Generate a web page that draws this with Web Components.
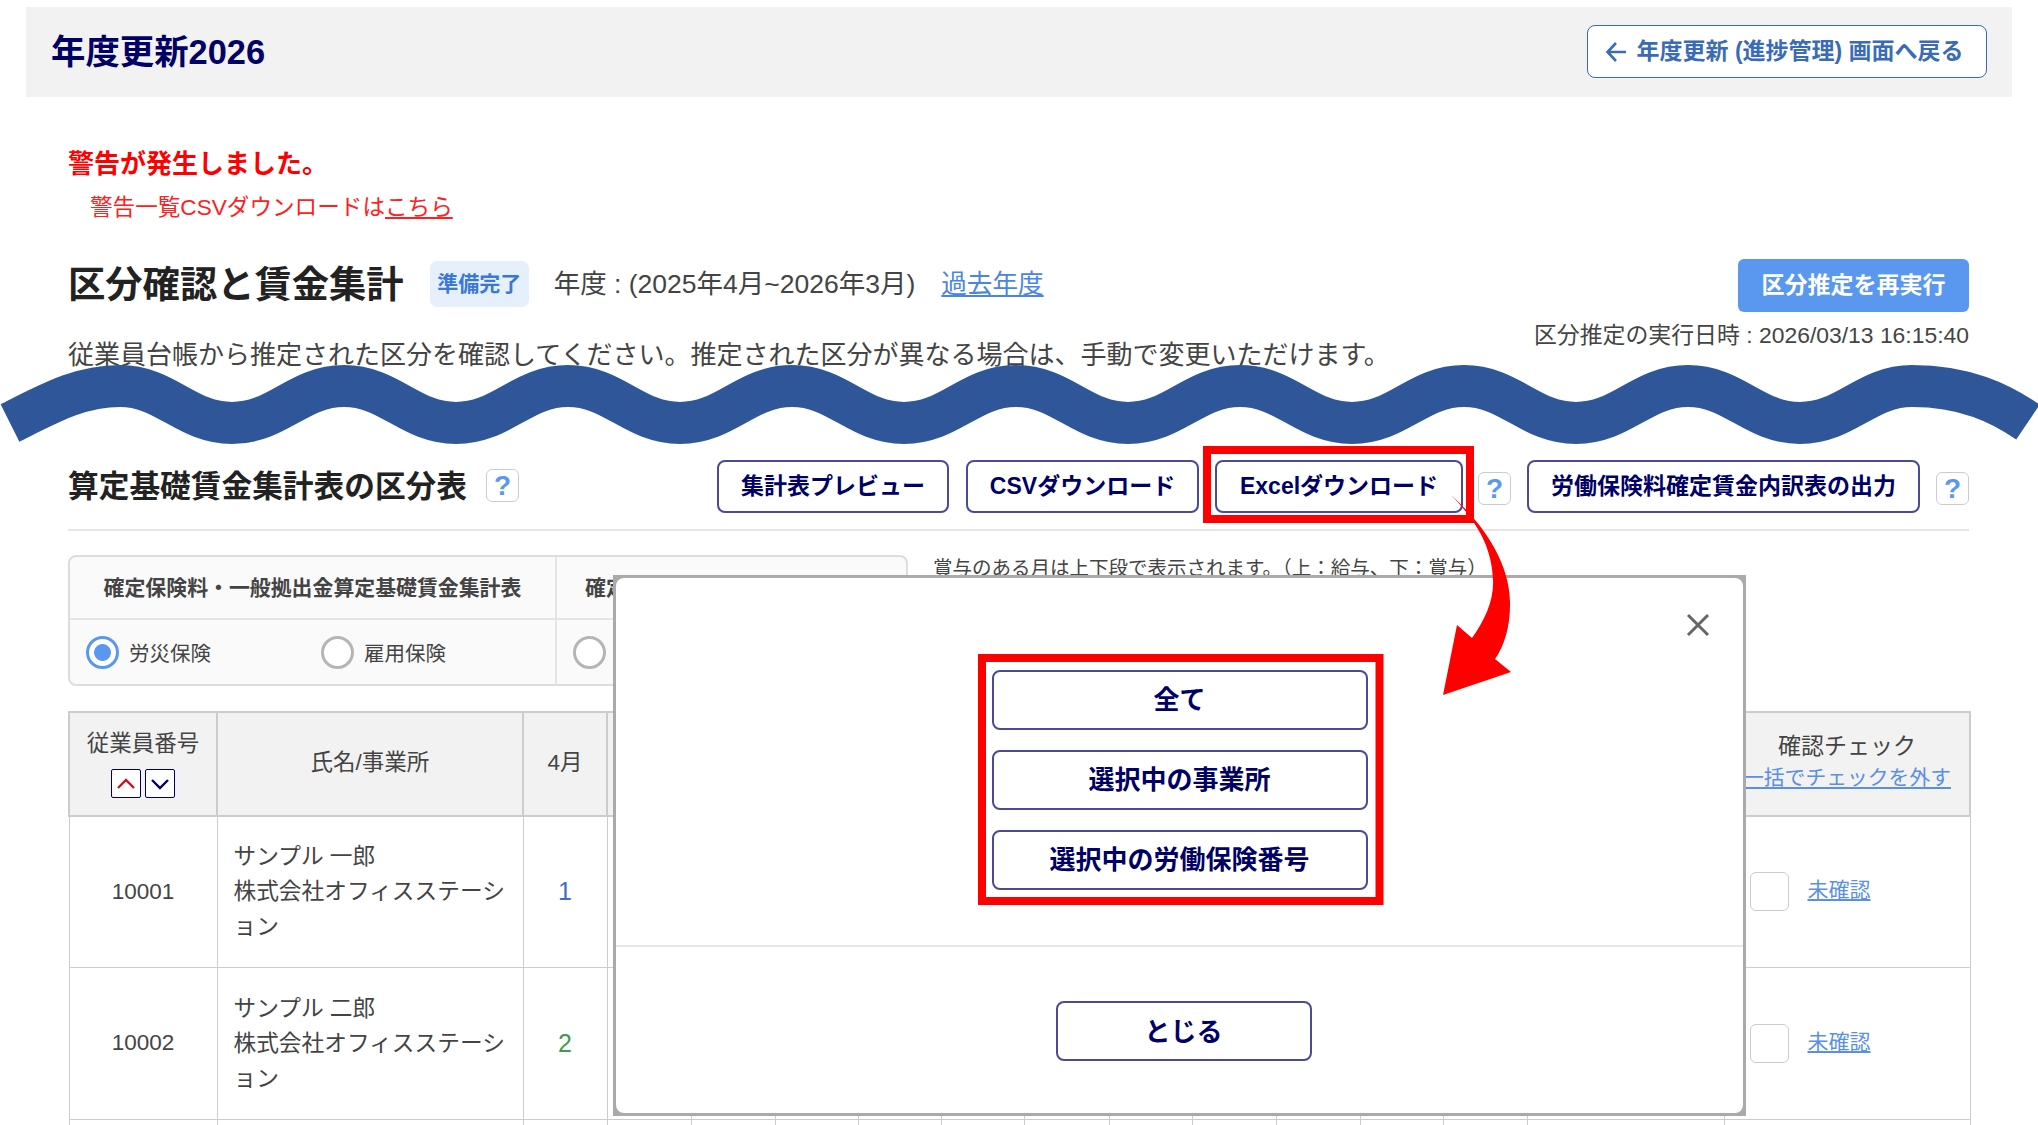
<!DOCTYPE html>
<html lang="ja">
<head>
<meta charset="utf-8">
<title>年度更新2026</title>
<style>
  html, body { margin: 0; padding: 0; background: #fff; }
  body {
    width: 2038px;
    height: 1125px;
    overflow: hidden;
    position: relative;
    font-family: "Liberation Sans", "Noto Sans CJK JP", sans-serif;
    color: #444;
  }
</style>
</head>
<body>
<app-header title="年度更新2026">
  <nav-btn kind="back">年度更新 (進捗管理) 画面へ戻る</nav-btn>
</app-header>

<page-main>
  <warn-box></warn-box>
  <result-head></result-head>
  <calc-toolbar></calc-toolbar>
  <tab-panel></tab-panel>
  <sheet-table></sheet-table>
</page-main>

<export-dialog></export-dialog>
<mark-layer></mark-layer>

<script>
const FONT = '"Liberation Sans", "Noto Sans CJK JP", sans-serif'

class AppHeader extends HTMLElement {
  constructor() {
    super()
    this.attachShadow({ mode: 'open' })
  }
  connectedCallback() {
    this.shadowRoot.innerHTML = `
      <style>
        :host {
          display: flex;
          align-items: center;
          justify-content: space-between;
          box-sizing: border-box;
          margin: 7px 0 0 26px;
          width: 1986px;
          height: 90px;
          padding: 0 25px;
          background: #f2f2f2;
          font-family: ${FONT};
        }
        h1 { margin: 0 0 7px; font-size: 34.4px; font-weight: 700; color: #000066; }
        ::slotted(nav-btn) { margin-top: -1px; }
      </style>
      <h1>${this.getAttribute('title')}</h1>
      <slot></slot>
    `
  }
}

class NavBtn extends HTMLElement {
  constructor() {
    super()
    this.attachShadow({ mode: 'open' })
  }
  connectedCallback() {
    const arrow = this.getAttribute('kind') === 'back' ? `
      <svg width="22" height="24" viewBox="0 0 22 24" fill="none" stroke="#3a6bb5" stroke-width="2.6" style="flex:none;margin-top:5px">
        <path d="M21 12H3M11 3 2.500 12l8.500 9"/>
      </svg>` : ''
    this.shadowRoot.innerHTML = `
      <style>
        :host {
          display: inline-flex;
          align-items: center;
          justify-content: center;
          box-sizing: border-box;
          height: 53px;
          padding: 0 23px 5px;
          background: #fff;
          border: 2px solid #4a4a96;
          border-radius: 8px;
          color: #000066;
          font-size: 23px;
          font-weight: 700;
          white-space: nowrap;
          font-family: ${FONT};
        }
        :host([kind="back"]) {
          width: 400px;
          gap: 10px;
          padding-left: 16.500px;
          padding-right: 0;
          justify-content: flex-start;
          border-color: #3a6bb5;
          color: #3a6bb5;
          border-width: 1.5px;
        }
        :host([kind="big"]) {
          width: 376px;
          height: 60px;
          padding: 0 0 6px;
          font-size: 26px;
        }
      </style>
      ${arrow}<slot></slot>
    `
  }
}

class HelpMark extends HTMLElement {
  constructor() {
    super()
    this.attachShadow({ mode: 'open' })
  }
  connectedCallback() {
    this.shadowRoot.innerHTML = `
      <style>
        :host {
          display: inline-flex;
          align-items: center;
          justify-content: center;
          box-sizing: border-box;
          width: 33px;
          height: 33px;
          background: #fff;
          border: 1.5px solid #ccc;
          border-radius: 6px;
          color: #5a98f0;
          font-size: 28px;
          font-weight: 700;
          font-family: ${FONT};
        }
      </style>
      ?
    `
  }
}

class PageMain extends HTMLElement {
  constructor() {
    super()
    this.attachShadow({ mode: 'open' })
  }
  connectedCallback() {
    this.shadowRoot.innerHTML = `
      <style>
        :host { display: block; padding: 0 69px 0 68px; }
      </style>
      <slot></slot>
    `
  }
}

class WarnBox extends HTMLElement {
  constructor() {
    super()
    this.attachShadow({ mode: 'open' })
  }
  connectedCallback() {
    this.shadowRoot.innerHTML = `
      <style>
        :host { display: block; padding-top: 48px; color: #ff0000; }
        .ttl { font-size: 26px; font-weight: 700; line-height: 38px; }
        .sub { font-size: 22.6px; line-height: 34px; margin: 8px 0 0 22px; color: #ff2020; }
        a { color: inherit; text-decoration: underline; }
      </style>
      <div class="ttl">警告が発生しました。</div>
      <div class="sub">警告一覧CSVダウンロードは<a>こちら</a></div>
    `
  }
}

class ResultHead extends HTMLElement {
  constructor() {
    super()
    this.attachShadow({ mode: 'open' })
  }
  connectedCallback() {
    this.shadowRoot.innerHTML = `
      <style>
        :host { display: block; margin-top: 34px; }
        .row { display: flex; align-items: center; height: 53px; }
        h2 { margin: 0 0 8px; font-size: 37.3px; font-weight: 700; color: #222; }
        .badge {
          margin-left: 26px;
          width: 99px;
          height: 46px;
          display: flex;
          align-items: center;
          justify-content: center;
          padding-bottom: 4px;
          box-sizing: border-box;
          margin-bottom: 3px;
          background: #e6f0fd;
          border-radius: 7px;
          color: #3a78d8;
          font-size: 21px;
          font-weight: 700;
        }
        .year { margin: 0 0 8px 25px; font-size: 26.5px; color: #444; white-space: nowrap; }
        a { margin: 0 0 8px 26px; font-size: 25.6px; color: #4a86e0; text-decoration: underline; }
        .rerun {
          margin-left: auto;
          width: 231px;
          height: 53px;
          display: flex;
          align-items: center;
          justify-content: center;
          box-sizing: border-box;
          padding-bottom: 6px;
          background: #5a98f0;
          border-radius: 6px;
          color: #fff;
          font-size: 23px;
          font-weight: 700;
        }
        .date {
          margin-top: 11px;
          text-align: right;
          font-size: 22.9px;
          line-height: 24px;
          color: #444;
        }
        .desc { margin-top: -9px; font-size: 26px; line-height: 34px; color: #444; white-space: nowrap; }
      </style>
      <div class="row">
        <h2>区分確認と賃金集計</h2>
        <span class="badge">準備完了</span>
        <span class="year">年度 : (2025年4月~2026年3月)</span>
        <a>過去年度</a>
        <span class="rerun">区分推定を再実行</span>
      </div>
      <div class="date">区分推定の実行日時 : 2026/03/13 16:15:40</div>
      <div class="desc">従業員台帳から推定された区分を確認してください。推定された区分が異なる場合は、手動で変更いただけます。</div>
    `
  }
}

class CalcToolbar extends HTMLElement {
  constructor() {
    super()
    this.attachShadow({ mode: 'open' })
  }
  connectedCallback() {
    this.shadowRoot.innerHTML = `
      <style>
        :host {
          display: flex;
          align-items: center;
          margin-top: 88px;
          padding-bottom: 16px;
          border-bottom: 2px solid #e5e5e5;
        }
        h3 { margin: 0 0 6px; font-size: 30.7px; font-weight: 700; color: #222; white-space: nowrap; }
        .first { margin-left: 19px; margin-top: -2px; }
        .btns { margin-left: auto; display: flex; align-items: center; }
        .low { margin-top: 4px; }
        .w1 { width: 232px; margin-right: 17px; }
        .w2 { width: 233px; margin-right: 16px; }
        .w3 { width: 248px; margin-right: 15px; }
        .w4 { width: 393px; margin: 0 16px 0 16px; }
      </style>
      <h3>算定基礎賃金集計表の区分表</h3>
      <help-mark class="first"></help-mark>
      <div class="btns">
        <nav-btn class="w1">集計表プレビュー</nav-btn>
        <nav-btn class="w2">CSVダウンロード</nav-btn>
        <nav-btn class="w3">Excelダウンロード</nav-btn>
        <help-mark class="low"></help-mark>
        <nav-btn class="w4">労働保険料確定賃金内訳表の出力</nav-btn>
        <help-mark class="low"></help-mark>
      </div>
    `
  }
}

class RadioItem extends HTMLElement {
  constructor() {
    super()
    this.attachShadow({ mode: 'open' })
  }
  connectedCallback() {
    this.shadowRoot.innerHTML = `
      <style>
        :host { display: inline-flex; align-items: center; gap: 10px; font-size: 20.5px; color: #444; }
        .dot {
          box-sizing: border-box;
          width: 33px;
          height: 33px;
          background: #fff;
          border: 3.5px solid #b5b5b5;
          border-radius: 50%;
        }
        :host([checked]) .dot {
          border-color: #5a98f0;
          background: radial-gradient(circle, #5a98f0 0 8px, #fff 8.8px);
        }
      </style>
      <span class="dot"></span><slot></slot>
    `
  }
}

class TabPanel extends HTMLElement {
  constructor() {
    super()
    this.attachShadow({ mode: 'open' })
  }
  connectedCallback() {
    this.shadowRoot.innerHTML = `
      <style>
        :host { display: flex; align-items: flex-start; margin-top: 24px; }
        .box {
          box-sizing: border-box;
          width: 840px;
          height: 131px;
          display: grid;
          grid-template-columns: 487px 1fr;
          grid-template-rows: 63px 1fr;
          background: #fafafa;
          border: 2px solid #ddd;
          border-radius: 8px;
        }
        .hd {
          display: flex;
          align-items: center;
          padding-bottom: 3px;
          box-sizing: border-box;
          font-size: 20.9px;
          font-weight: 700;
          color: #444;
          border-bottom: 2px solid #e5e5e5;
          white-space: nowrap;
        }
        .hd.a { justify-content: center; border-right: 2px solid #e5e5e5; }
        .hd.b { padding-left: 28px; }
        .opts { display: flex; align-items: center; padding-left: 16px; }
        .opts.a { gap: 110px; border-right: 2px solid #e5e5e5; }
        .note { margin: 1px 0 0 25px; font-size: 19.5px; line-height: 24px; color: #444; white-space: nowrap; }
      </style>
      <div class="box">
        <div class="hd a">確定保険料・一般拠出金算定基礎賃金集計表</div>
        <div class="hd b">確定</div>
        <div class="opts a">
          <radio-item checked>労災保険</radio-item>
          <radio-item>雇用保険</radio-item>
        </div>
        <div class="opts"><radio-item></radio-item></div>
      </div>
      <div class="note">賞与のある月は上下段で表示されます。（上：給与、下：賞与）</div>
    `
  }
}

class SheetTable extends HTMLElement {
  constructor() {
    super()
    this.attachShadow({ mode: 'open' })
  }
  row(no, name, count, color, h) {
    return `
      <tr style="height:${h}px">
        <td class="c">${no}</td>
        <td class="name">${name}<br>株式会社オフィスステーション</td>
        <td class="c num" style="color:${color}">${count}</td>
        ${'<td></td>'.repeat(12)}
        <td class="chk"><span class="box"></span><a>未確認</a></td>
      </tr>`
  }
  connectedCallback() {
    const widths = [148, 306, 84, 84, 84, 83, 83, 83, 85, 83, 84, 84, 83, 84, 197, 246]
    this.shadowRoot.innerHTML = `
      <style>
        :host { display: block; margin-top: 25px; }
        table {
          table-layout: fixed;
          width: 1900px;
          border-collapse: collapse;
          font-size: 22.5px;
          color: #444;
        }
        th, td { border: 1.5px solid #ccc; padding: 0; }
        th { background: #f2f2f2; font-weight: 400; border-width: 2px; padding-bottom: 8px; }
        tr.head { height: 104px; }
        .c { text-align: center; }
        .num { font-size: 25px; }
        .name { padding: 0 12px 0 16px; font-size: 22.7px; line-height: 35px; line-break: anywhere; }
        .sort { display: flex; justify-content: center; gap: 4px; margin-top: 12px; }
        .sort span {
          box-sizing: border-box;
          width: 30px;
          height: 29px;
          display: flex;
          align-items: center;
          justify-content: center;
          background: #fff;
          border: 1.5px solid #000066;
          border-radius: 2px;
        }
        th.emp { padding-bottom: 5px; }
        .ttl { line-height: 30px; font-size: 23px; }
        th a, td a { color: #5a8fe6; text-decoration: underline; }
        th a { display: block; margin-top: 2px; font-size: 20.8px; line-height: 30px; white-space: nowrap; }
        th.confirm { padding-bottom: 4px; }
        .chk { padding-left: 25px; white-space: nowrap; }
        .chk .box {
          display: inline-block;
          box-sizing: border-box;
          width: 39px;
          height: 39px;
          border: 1.5px solid #ccc;
          border-radius: 6px;
          vertical-align: middle;
        }
        .chk a { display: inline-block; margin: 0 0 7px 19px; font-size: 21px; vertical-align: middle; }
      </style>
      <table>
        <colgroup>${widths.map(w => `<col style="width:${w}px">`).join('')}</colgroup>
        <tr class="head">
          <th class="emp">
            <div>従業員番号</div>
            <div class="sort">
              <span><svg width="20" height="12" viewBox="0 0 20 12" fill="none" stroke="#cc1122" stroke-width="2.4"><path d="M2 10l8-8 8 8"/></svg></span>
              <span><svg width="20" height="12" viewBox="0 0 20 12" fill="none" stroke="#000066" stroke-width="2.4"><path d="M2 2l8 8 8-8"/></svg></span>
            </div>
          </th>
          <th>氏名/事業所</th>
          <th>4月</th>
          ${'<th></th>'.repeat(12)}
          <th class="confirm"><div class="ttl">確認チェック</div><a>一括でチェックを外す</a></th>
        </tr>
        ${this.row('10001', 'サンプル 一郎', '1', '#3f6fc4', 151)}
        ${this.row('10002', 'サンプル 二郎', '2', '#3d9a4e', 152)}
        <tr style="height:40px">${'<td></td>'.repeat(16)}</tr>
      </table>
    `
  }
}

class ExportDialog extends HTMLElement {
  constructor() {
    super()
    this.attachShadow({ mode: 'open' })
  }
  connectedCallback() {
    this.shadowRoot.innerHTML = `
      <style>
        :host {
          position: absolute;
          left: 613px;
          top: 575px;
          width: 1133px;
          height: 541px;
          box-sizing: border-box;
          padding: 3px;
          background: #aaa;
          font-family: ${FONT};
        }
        .sheet {
          position: relative;
          height: 100%;
          display: flex;
          flex-direction: column;
          background: #fff;
          border-radius: 8px;
        }
        .close { position: absolute; top: 35px; right: 33px; }
        .body {
          height: 369px;
          box-sizing: border-box;
          padding-top: 92px;
          display: flex;
          flex-direction: column;
          align-items: center;
          gap: 20px;
          border-bottom: 2px solid #e5e5e5;
        }
        .foot { flex: 1; display: flex; align-items: center; justify-content: center; padding: 1px 0 0 8px; }
        .foot nav-btn { width: 256px; padding-bottom: 3px; }
      </style>
      <div class="sheet">
        <svg class="close" width="24" height="24" viewBox="0 0 24 24" stroke="#666" stroke-width="3"><path d="M2 2l20 20M22 2 2 22"/></svg>
        <div class="body">
          <nav-btn kind="big">全て</nav-btn>
          <nav-btn kind="big">選択中の事業所</nav-btn>
          <nav-btn kind="big">選択中の労働保険番号</nav-btn>
        </div>
        <div class="foot"><nav-btn kind="big">とじる</nav-btn></div>
      </div>
    `
  }
}

// wave, red frames and the arrow lie over everything else
class MarkLayer extends HTMLElement {
  constructor() {
    super()
    this.attachShadow({ mode: 'open' })
  }
  wave() {
    let d = 'M10 423C50 403 80 386 120 386'
    let x = 120
    let down = true
    while (x < 1912) {
      const y0 = down ? 386 : 423
      const y1 = down ? 423 : 386
      d += `C${x + 46} ${y0} ${x + 66} ${y1} ${x + 112} ${y1}`
      x += 112
      down = !down
    }
    return d + 'C1965 386 2000 403 2028 422'
  }
  connectedCallback() {
    this.shadowRoot.innerHTML = `
      <style>
        :host { position: absolute; left: 0; top: 0; width: 2038px; height: 1125px; pointer-events: none; }
        svg { display: block; }
      </style>
      <svg width="2038" height="1125" viewBox="0 0 2038 1125" fill="none">
        <path d="${this.wave()}" stroke="#30569a" stroke-width="42"/>
        <rect x="1207" y="450" width="263" height="69" stroke="#ff0000" stroke-width="8"/>
        <rect x="982" y="658" width="397.500" height="243" stroke="#ff0000" stroke-width="8"/>
        <path fill="#ff0000" d="M1451 495C1490 530 1511 570 1510 605C1510 625 1505 645 1495 659L1511 672L1443 695L1457 625L1472 638C1485 620 1494 600 1493 580C1492 550 1480 525 1451 495Z"/>
      </svg>
    `
  }
}

customElements.define('app-header', AppHeader)
customElements.define('nav-btn', NavBtn)
customElements.define('help-mark', HelpMark)
customElements.define('page-main', PageMain)
customElements.define('warn-box', WarnBox)
customElements.define('result-head', ResultHead)
customElements.define('calc-toolbar', CalcToolbar)
customElements.define('radio-item', RadioItem)
customElements.define('tab-panel', TabPanel)
customElements.define('sheet-table', SheetTable)
customElements.define('export-dialog', ExportDialog)
customElements.define('mark-layer', MarkLayer)
</script>
</body>
</html>
